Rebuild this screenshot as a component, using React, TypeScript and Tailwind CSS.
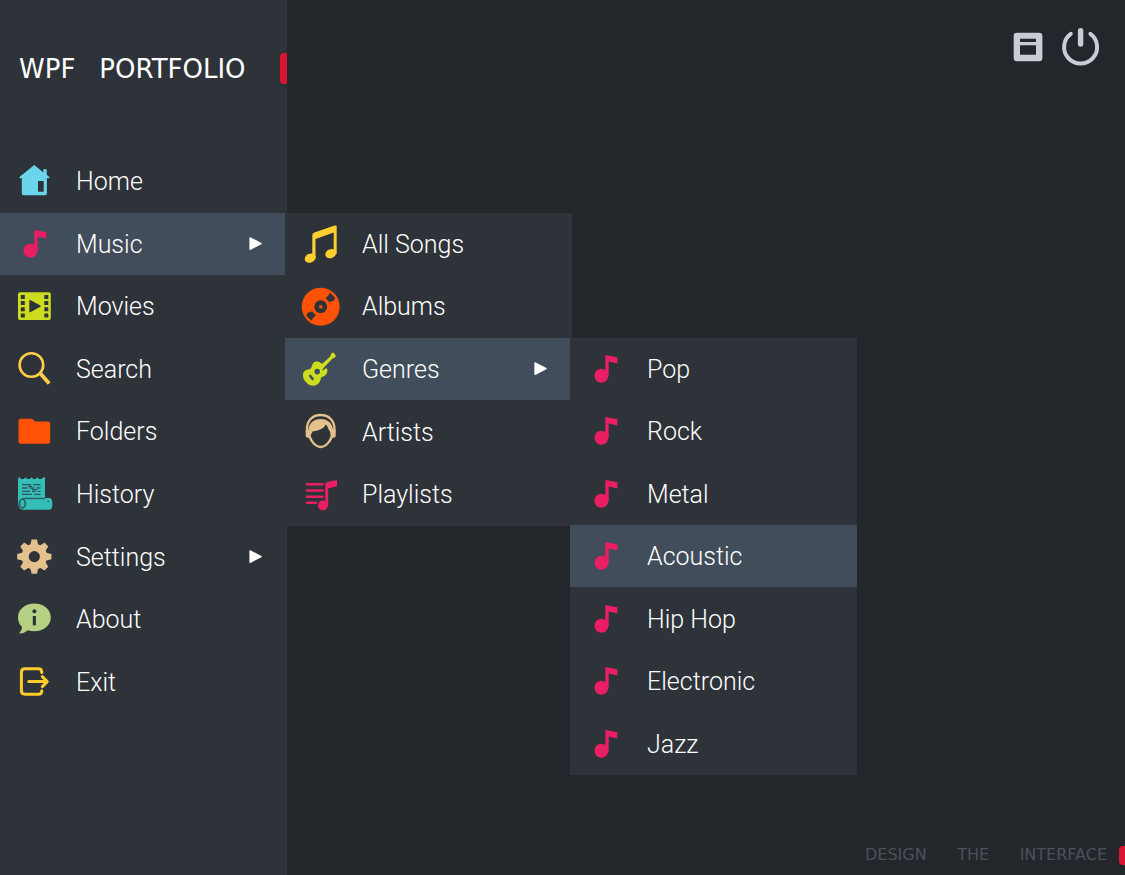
import type { ReactNode } from "react";

const glyph = "h-10 w-10 shrink-0";

function Glyph({ children }: { children: ReactNode }) {
  return (
    <svg viewBox="0 0 40 40" className={glyph} aria-hidden="true">
      {children}
    </svg>
  );
}

const HomeIcon = () => (
  <Glyph>
    <path
      fill="#6bd5ec"
      fillRule="evenodd"
      d="M20.3 4 L29.3 11.6 V8.4 Q31 7.6 32.7 8.4 V13.7 L35.6 16.2 L34.9 17.3 H32.9 V32.5 Q32.9 34.2 31.2 34.2 H9.5 Q7.8 34.2 7.8 32.5 V17.3 H5.9 L5.1 16.2 Z M24 20 V30.8 H29.7 V20 Z"
    />
  </Glyph>
);

const NoteIcon = () => (
  <Glyph>
    <g fill="#e91e63">
      <circle cx="16.4" cy="26.8" r="7" />
      <path d="M20.3 6 L32.4 8.2 V14.5 L23.7 12.4 V27 H20.3 Z" />
    </g>
  </Glyph>
);

const MovieIcon = () => (
  <Glyph>
    <rect x="4" y="6.3" width="32.8" height="27.8" rx="2" fill="#cddc1e" />
    <g fill="#2e3239">
      {[9, 15, 21.3, 27.5].map((y) => (
        <g key={y}>
          <rect x="6.8" y={y} width="4" height="4" rx="0.5" />
          <rect x="30.3" y={y} width="4" height="4" rx="0.5" />
        </g>
      ))}
      <path d="M15.3 15 Q15.3 13.5 16.7 14.2 L26.4 19.4 Q27.4 20.1 26.4 20.8 L16.7 26.1 Q15.3 26.8 15.3 25.4 Z" />
    </g>
  </Glyph>
);

const SearchIcon = () => (
  <Glyph>
    <g fill="none" stroke="#fccf47">
      <circle cx="17.4" cy="16" r="11.8" strokeWidth="2.6" />
      <path d="M25.4 23.6 L28 26.2" strokeWidth="2.6" />
      <path d="M26.8 25 L35.2 34.4" strokeWidth="3.8" />
    </g>
  </Glyph>
);

const FolderIcon = () => (
  <Glyph>
    <path
      fill="#ff5206"
      d="M6.5 7.7 H17.6 Q18.4 7.7 19 8.4 L21.2 10.6 H34 Q36.2 10.6 36.2 12.8 V30.6 Q36.2 32.8 34 32.8 H6.7 Q4.5 32.8 4.5 30.6 V9.8 Q4.5 7.7 6.5 7.7 Z"
    />
  </Glyph>
);

const HistoryIcon = () => (
  <Glyph>
    <path
      fill="#35bdb8"
      d="M4 4 L5.6 3.2 L7.2 5 H9.8 L11.6 3.2 L13.3 5 H15.8 L17.6 3.2 L19.3 5 H21.6 L23.4 3.2 L25 5 H27.5 L29.2 3.2 L31 3.6 V24 H36 Q38.4 25.2 38.4 30 Q38.4 35.8 35.5 35.8 H8.4 Q4 35 4 28 Z"
    />
    <g fill="none" stroke="#2c5960" strokeWidth="1.3">
      <path d="M8 10.6h9M19 10.6h7.5M8 14h5.5M15.5 14h5M22.5 14h4M8 17.3h8M18 17.3h3.5M23.5 17.3h3M8 20.4h10M20 20.4h6.5M14 12.3h4M18 15.7h5" />
      <path d="M8.5 24.5H31" />
      <ellipse cx="8.4" cy="29.6" rx="2.9" ry="4.3" strokeWidth="1.6" />
      <path d="M33.4 27.3h1.8" />
    </g>
  </Glyph>
);

const GearIcon = () => (
  <Glyph>
    <g fill="#e4c08d">
      {[0, 45, 90, 135, 180, 225, 270, 315].map((a) => (
        <path
          key={a}
          d="M16 9.5 L17.6 2.5 H23 L24.6 9.5 Z"
          transform={`rotate(${a} 20.3 19.6)`}
        />
      ))}
      <circle cx="20.3" cy="19.6" r="9.2" fill="none" stroke="#e4c08d" strokeWidth="7.2" />
    </g>
  </Glyph>
);

const AboutIcon = () => (
  <Glyph>
    <path
      fill="#b5d083"
      d="M20.4 4.6 C29.6 4.6 36.8 10.6 36.8 18.4 C36.8 26.2 29.6 32.2 20.4 32.2 Q16.6 32.2 14 31.2 Q9.6 34.8 5 34.6 Q8.2 31.6 8 28 Q4 24 4 18.4 C4 10.6 11.2 4.6 20.4 4.6 Z"
    />
    <circle cx="20.4" cy="12.2" r="2" fill="#2e3239" />
    <path d="M18.8 17H21.9V26.3H18.8Z" fill="#2e3239" />
  </Glyph>
);

const ExitIcon = () => (
  <Glyph>
    <g fill="none" stroke="#fdcb2c" strokeWidth="3" strokeLinecap="round" strokeLinejoin="round">
      <path d="M27.8 10.6 Q27.8 6.8 24.5 6.8 H11 Q7.4 6.8 7.4 10.4 V28.6 Q7.4 32.3 11 32.3 H24.5 Q27.8 32.3 27.8 28.8" />
      <path d="M14.8 19.6 H33 M28.3 14.6 L33.2 19.6 L28.3 24.6" />
    </g>
  </Glyph>
);

const SongsIcon = () => (
  <Glyph>
    <g fill="#fdcf2f">
      <ellipse cx="10.2" cy="34.2" rx="5.6" ry="4.4" transform="rotate(-22 10.2 34.2)" />
      <ellipse cx="30.8" cy="29.6" rx="5.6" ry="4.4" transform="rotate(-22 30.8 29.6)" />
      <path d="M12.3 11.4 Q12.3 9.4 14.4 8.6 L34.6 1.6 Q36.7 1 36.7 2.8 V29.8 H33.7 V8.4 L15.5 15 V34.6 H12.3 Z" />
    </g>
  </Glyph>
);

const AlbumIcon = () => (
  <Glyph>
    <circle cx="20.7" cy="20.7" r="19" fill="#ff5206" />
    <g fill="#2e3239">
      <path d="M29.8 6.6 L34.9 11.4 L34.2 14.4 L29.2 16.2 Q28 13.8 25.4 12.2 L28.4 9.4 Z" />
      <path d="M11.6 34.8 L6.5 30 L7.2 27 L12.2 25.2 Q13.4 27.6 16 29.2 L13 32 Z" />
      <circle cx="20.7" cy="20.7" r="6.4" />
    </g>
    <circle cx="20.7" cy="20.7" r="1.8" fill="#ff5206" />
  </Glyph>
);

const GuitarIcon = () => (
  <Glyph>
    <path
      fill="#cddc1e"
      d="M3 27.2 C2.4 22.4 6 20.6 9.2 20.2 C12 19.8 11.2 17.1 13 14.4 C15 11.8 18.8 12 21.4 14.4 L22.6 14.6 L30.2 7.4 L31.2 4.8 Q32.7 2.8 34 4.2 L35.6 5.9 Q36.2 7.6 34.6 8.7 L32.5 9.6 L24.6 17.8 L22.6 20.2 Q22 21.6 23.4 21.2 Q26.2 18 27.2 20 C28 24.2 25.4 27 22.6 27.8 C20 28.6 21.2 30.2 19.8 32.8 C17 37.6 11.2 38 7.4 34.6 C4.6 31.9 3.4 30.2 3 27.2 Z"
    />
    <circle cx="17.2" cy="22.6" r="2.8" fill="#414d5a" />
    <path d="M10.2 27 L12.6 29.8" stroke="#414d5a" strokeWidth="2.6" strokeLinecap="round" />
  </Glyph>
);

const ArtistIcon = () => (
  <Glyph>
    <g fill="none" stroke="#e4c08d">
      <path d="M7 20 V17 C7 8.4 12.7 3 20.7 3 C28.7 3 34.4 8.4 34.4 17 V20" strokeWidth="2.4" />
      <path d="M9.4 24.2 C11.4 29.4 15.6 35 20.7 35 C25.8 35 30 29.4 32 24.2" strokeWidth="2.4" />
    </g>
    <path
      fill="#e4c08d"
      d="M5.7 18 H8.4 C8.8 11.4 13.8 7 20.7 7 C27.6 7 32.6 11.4 33 18 H35.7 V24 Q35.7 25.6 33.4 25.8 L30.8 25 L30.2 20 Q28.2 17.4 27.2 14 L25.8 12.6 Q23.5 18.2 12.6 19.4 L10.8 23 L10.4 25.6 L8 25.8 Q5.7 25.6 5.7 24 Z"
    />
  </Glyph>
);

const PlaylistIcon = () => (
  <Glyph>
    <path
      d="M7 10.2H22.6M7 16.4H22.6M7 22.7H22.6M7 28.8H16"
      stroke="#e91e63"
      strokeWidth="2.5"
      strokeLinecap="round"
    />
    <g fill="#e91e63">
      <circle cx="22.9" cy="31.5" r="4.9" />
      <path d="M25.2 10.2 Q25.2 8.4 27 8 L37 6 V12.3 L28.2 14.4 V32 H25.2 Z" />
    </g>
  </Glyph>
);

type Item = {
  label: string;
  icon: () => ReactNode;
  hasMenu?: boolean;
  active?: boolean;
  items?: Item[];
};

const genres: Item[] = [
  { label: "Pop", icon: NoteIcon },
  { label: "Rock", icon: NoteIcon },
  { label: "Metal", icon: NoteIcon },
  { label: "Acoustic", icon: NoteIcon, active: true },
  { label: "Hip Hop", icon: NoteIcon },
  { label: "Electronic", icon: NoteIcon },
  { label: "Jazz", icon: NoteIcon },
];

const music: Item[] = [
  { label: "All Songs", icon: SongsIcon },
  { label: "Albums", icon: AlbumIcon },
  { label: "Genres", icon: GuitarIcon, hasMenu: true, active: true, items: genres },
  { label: "Artists", icon: ArtistIcon },
  { label: "Playlists", icon: PlaylistIcon },
];

const mainMenu: Item[] = [
  { label: "Home", icon: HomeIcon },
  { label: "Music", icon: NoteIcon, hasMenu: true, active: true, items: music },
  { label: "Movies", icon: MovieIcon },
  { label: "Search", icon: SearchIcon },
  { label: "Folders", icon: FolderIcon },
  { label: "History", icon: HistoryIcon },
  { label: "Settings", icon: GearIcon, hasMenu: true },
  { label: "About", icon: AboutIcon },
  { label: "Exit", icon: ExitIcon },
];

function MenuItem({ item, nested }: { item: Item; nested?: boolean }) {
  const Icon = item.icon;
  return (
    <li className="relative">
      <button
        type="button"
        aria-haspopup={item.hasMenu ? "menu" : undefined}
        aria-expanded={item.hasMenu ? Boolean(item.items) : undefined}
        className={`flex h-full w-full items-center pr-6 text-left ${nested ? "pl-[15px]" : "pl-3.5"} ${
          item.active ? "bg-[#414d5a]" : "hover:bg-[#414d5a]"
        }`}
      >
        <Icon />
        <span className="ml-[22px] flex-1 pt-0.5">{item.label}</span>
        {item.hasMenu && (
          <svg viewBox="0 0 14 14" className="h-3.5 w-3.5" aria-hidden="true">
            <path d="M0.4 1.2 Q0.4 -0.1 1.8 0.4 L12.4 6 Q13.2 6.6 12.4 7.2 L1.8 12.8 Q0.4 13.3 0.4 12 Z" fill="#fff" />
          </svg>
        )}
      </button>
      {item.items && (
        <div className="absolute top-0 left-[285px] z-10 w-[287px]">
          <MenuList nested items={item.items} size={item.items.length === 7 ? "h-[437px]" : "h-[313px]"} />
        </div>
      )}
    </li>
  );
}

function MenuList({ items, size, nested }: { items: Item[]; size: string; nested?: boolean }) {
  return (
    <ul className={`grid auto-rows-fr bg-[#2e3239] ${size}`}>
      {items.map((item) => (
        <MenuItem key={item.label} item={item} nested={nested} />
      ))}
    </ul>
  );
}

export default function App() {
  return (
    <div className="flex min-h-screen bg-[#23262a] font-['Roboto',sans-serif] text-[25px] leading-8 font-light text-white">
      <aside className="w-[287px] shrink-0 bg-[#2e3239]">
        <header className="flex h-[150px] items-start justify-between pt-[53px] pl-[19px]">
          <h1 className="flex gap-6 font-['DejaVu_Sans',sans-serif] text-[26px] leading-8 font-normal">
            <span>WPF </span>
            <span>PORTFOLIO</span>
          </h1>
          <span className="h-[31px] w-[7px] rounded-l bg-[#dc1434]" />
        </header>
        <nav aria-label="Main menu">
          <MenuList items={mainMenu} size="h-[563px]" />
        </nav>
      </aside>

      <main className="flex flex-1 flex-col justify-between">
        <div className="flex justify-end gap-[17px] pt-[27px] pr-6">
          <button type="button" aria-label="Window" className="h-10 w-8">
            <svg viewBox="0 0 32 40" className="h-10 w-8">
              <path
                fill="#c9ccd4"
                fillRule="evenodd"
                d="M5 5.7 H27 Q30.4 5.7 30.4 9 V31 Q30.4 34.2 27 34.2 H5 Q1.7 34.2 1.7 31 V9 Q1.7 5.7 5 5.7 Z M8 11.7 V14.9 H24 V11.7 Z M8 18.2 V27.8 H24 V18.2 Z"
              />
            </svg>
          </button>
          <button type="button" aria-label="Power" className="h-10 w-10">
            <svg viewBox="0 0 40 40" className="h-10 w-10" fill="none" stroke="#c9ccd4" strokeLinecap="round">
              <path d="M9.8 6.8 A16.5 16.5 0 1 0 29.4 6.8" strokeWidth="4" />
              <path d="M19.6 3.7 V17.1" strokeWidth="5.4" />
            </svg>
          </button>
        </div>

        <footer className="flex items-center justify-end pb-2.5">
          <p className="mr-3 flex w-[242px] justify-between font-['DejaVu_Sans',sans-serif] text-[16px] leading-5 font-normal text-[#4c515c]">
            <span>DESIGN </span>
            <span>THE </span>
            <span>INTERFACE</span>
          </p>
          <span className="h-[19px] w-1.5 rounded-l bg-[#dc1434]" />
        </footer>
      </main>
    </div>
  );
}
